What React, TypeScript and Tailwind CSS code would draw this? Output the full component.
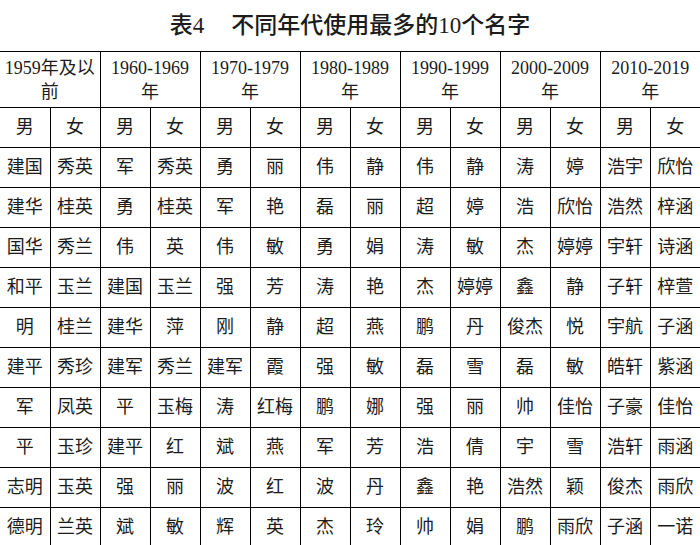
const decades: [string, string][] = [
  ["1959年及以", "前"],
  ["1960-1969", "年"],
  ["1970-1979", "年"],
  ["1980-1989", "年"],
  ["1990-1999", "年"],
  ["2000-2009", "年"],
  ["2010-2019", "年"],
];

const rows: string[][] = [
  ["建国", "秀英", "军", "秀英", "勇", "丽", "伟", "静", "伟", "静", "涛", "婷", "浩宇", "欣怡"],
  ["建华", "桂英", "勇", "桂英", "军", "艳", "磊", "丽", "超", "婷", "浩", "欣怡", "浩然", "梓涵"],
  ["国华", "秀兰", "伟", "英", "伟", "敏", "勇", "娟", "涛", "敏", "杰", "婷婷", "宇轩", "诗涵"],
  ["和平", "玉兰", "建国", "玉兰", "强", "芳", "涛", "艳", "杰", "婷婷", "鑫", "静", "子轩", "梓萱"],
  ["明", "桂兰", "建华", "萍", "刚", "静", "超", "燕", "鹏", "丹", "俊杰", "悦", "宇航", "子涵"],
  ["建平", "秀珍", "建军", "秀兰", "建军", "霞", "强", "敏", "磊", "雪", "磊", "敏", "皓轩", "紫涵"],
  ["军", "凤英", "平", "玉梅", "涛", "红梅", "鹏", "娜", "强", "丽", "帅", "佳怡", "子豪", "佳怡"],
  ["平", "玉珍", "建平", "红", "斌", "燕", "军", "芳", "浩", "倩", "宇", "雪", "浩轩", "雨涵"],
  ["志明", "玉英", "强", "丽", "波", "红", "波", "丹", "鑫", "艳", "浩然", "颖", "俊杰", "雨欣"],
  ["德明", "兰英", "斌", "敏", "辉", "英", "杰", "玲", "帅", "娟", "鹏", "雨欣", "子涵", "一诺"],
];

const cell = "border-l border-black first:border-l-0 text-center align-middle p-0";

export default function App() {
  return (
    <div
      className="w-[700px] h-[545px] overflow-hidden bg-white text-[#1c1c1c]"
      style={{ fontFamily: '"Liberation Serif", "Noto Sans CJK SC", serif' }}
    >
      <h1 className="h-[51px] flex items-center justify-center text-[23px] font-medium pt-[1px]">
        表4<span className="inline-block w-[27px]" />不同年代使用最多的10个名字
      </h1>
      <table className="w-[700px] table-fixed border-collapse text-[18px]">
        <colgroup>
          {Array.from({ length: 14 }).map((_, i) => (
            <col key={i} className="w-[50px]" />
          ))}
        </colgroup>
        <tbody>
          <tr className="h-[56px] border-t border-b border-black">
            {decades.map(([a, b]) => (
              <td key={a} colSpan={2} className={cell}>
                <div className="leading-[24px]">{a}</div>
                <div className="leading-[24px]">{b}</div>
              </td>
            ))}
          </tr>
          <tr className="h-[40px] border-b border-black">
            {Array.from({ length: 14 }).map((_, i) => (
              <td key={i} className={cell}>
                {i % 2 === 0 ? "男" : "女"}
              </td>
            ))}
          </tr>
          {rows.map((r, ri) => (
            <tr key={ri} className="h-[40px] border-b border-black">
              {r.map((n, ci) => (
                <td key={ci} className={cell}>
                  {n}
                </td>
              ))}
            </tr>
          ))}
        </tbody>
      </table>
    </div>
  );
}
